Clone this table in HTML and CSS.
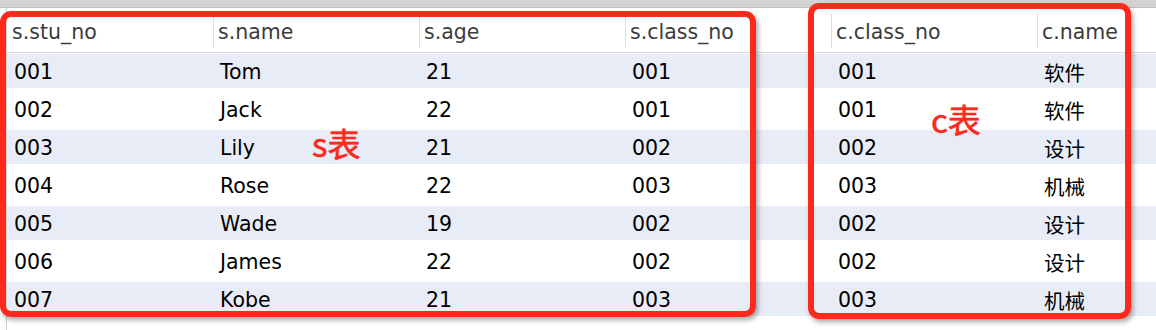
FILE: index.html
```html
<!DOCTYPE html>
<html lang="zh-CN">
<head>
<meta charset="utf-8">
<title>Query result</title>
<link rel="stylesheet" href="styles.css">
</head>
<body>
<div class="window">
  <div class="topbar"></div>
  <div class="grid">
    <div class="row head">
      <div class="hc">s.stu_no</div>
      <div class="hc">s.name</div>
      <div class="hc">s.age</div>
      <div class="hc">s.class_no</div>
      <div class="hc">c.class_no</div>
      <div class="hc">c.name</div>
    </div>
    <div class="row odd"><div class="c">001</div><div class="c">Tom</div><div class="c">21</div><div class="c">001</div><div class="c">001</div><div class="c">软件</div></div>
    <div class="row"><div class="c">002</div><div class="c">Jack</div><div class="c">22</div><div class="c">001</div><div class="c">001</div><div class="c">软件</div></div>
    <div class="row odd"><div class="c">003</div><div class="c">Lily</div><div class="c">21</div><div class="c">002</div><div class="c">002</div><div class="c">设计</div></div>
    <div class="row"><div class="c">004</div><div class="c">Rose</div><div class="c">22</div><div class="c">003</div><div class="c">003</div><div class="c">机械</div></div>
    <div class="row odd"><div class="c">005</div><div class="c">Wade</div><div class="c">19</div><div class="c">002</div><div class="c">002</div><div class="c">设计</div></div>
    <div class="row"><div class="c">006</div><div class="c">James</div><div class="c">22</div><div class="c">002</div><div class="c">002</div><div class="c">设计</div></div>
    <div class="row odd"><div class="c">007</div><div class="c">Kobe</div><div class="c">21</div><div class="c">003</div><div class="c">003</div><div class="c">机械</div></div>
  </div>

  <div class="mark mark-s"></div>
  <div class="mark mark-c"></div>
  <div class="label label-s">s表</div>
  <div class="label label-c">c表</div>
</div>
</body>
</html>
```

FILE: styles.css
```css
* { box-sizing: border-box; }

html, body {
  margin: 0;
  padding: 0;
  background: #ffffff;
}

body {
  width: 1156px;
  height: 330px;
  overflow: hidden;
  font-family: "DejaVu Sans", "Noto Sans CJK SC", sans-serif;
  font-size: 20.5px;
}

.window {
  position: relative;
  width: 1156px;
  height: 330px;
  overflow: hidden;
  display: flex;
  flex-direction: column;
}

.topbar {
  height: 8px;
  flex: none;
  background: #d3d3d3;
  border-bottom: 1px solid #c0c0c0;
}

.grid {
  flex: 1;
  margin-left: 6px;
  border-left: 1px solid #cfcfcf;
  display: flex;
  flex-direction: column;
}

.row {
  display: grid;
  grid-template-columns: repeat(6, 206px);
  height: 38px;
  flex: none;
  width: 1236px;
}

.row.head {
  height: 45px;
  border-bottom: 1px solid #d8d8d8;
  background: #ffffff;
}

.row.odd {
  background: linear-gradient(to bottom, transparent 1px, #e8ecf6 1px, #e8ecf6 35px, transparent 35px);
}

.hc {
  display: flex;
  align-items: center;
  padding-left: 5px;
  color: #3b3b3b;
  padding-top: 3px;
  background: linear-gradient(#dedede, #dedede) no-repeat 0 6px / 1px 34px;
}

.hc:first-child {
  background: none;
}

.c {
  display: flex;
  align-items: center;
  padding-left: 7px;
  color: #000000;
}

.mark {
  position: absolute;
  border: 6px solid #fb2a1d;
  border-radius: 11px;
  box-shadow: 2px 3px 5px rgba(0, 0, 0, 0.35);
}

.mark-s {
  left: 0;
  top: 11px;
  width: 756px;
  height: 306px;
}

.mark-c {
  left: 808px;
  top: 3px;
  width: 323px;
  height: 316px;
}

.label {
  position: absolute;
  color: #fb2a1d;
  font-family: "Noto Sans CJK SC", sans-serif;
  font-size: 33px;
  font-weight: 400;
  -webkit-text-stroke: 0.6px #fb2a1d;
  line-height: 1;
}

.label-s {
  left: 312px;
  top: 127px;
}

.label-c {
  left: 931px;
  top: 103px;
}
```
